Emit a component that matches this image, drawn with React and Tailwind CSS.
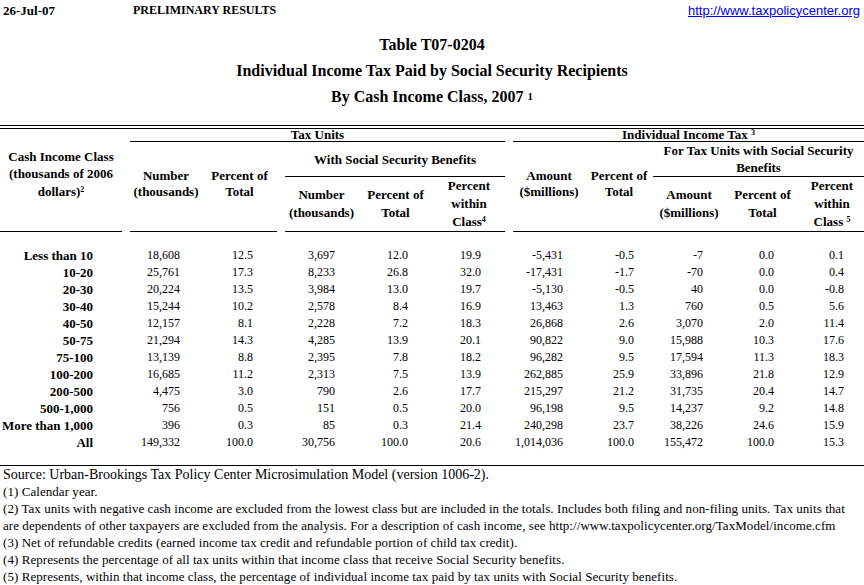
const rows = [
  ["Less than 10", "18,608", "12.5", "3,697", "12.0", "19.9", "-5,431", "-0.5", "-7", "0.0", "0.1"],
  ["10-20", "25,761", "17.3", "8,233", "26.8", "32.0", "-17,431", "-1.7", "-70", "0.0", "0.4"],
  ["20-30", "20,224", "13.5", "3,984", "13.0", "19.7", "-5,130", "-0.5", "40", "0.0", "-0.8"],
  ["30-40", "15,244", "10.2", "2,578", "8.4", "16.9", "13,463", "1.3", "760", "0.5", "5.6"],
  ["40-50", "12,157", "8.1", "2,228", "7.2", "18.3", "26,868", "2.6", "3,070", "2.0", "11.4"],
  ["50-75", "21,294", "14.3", "4,285", "13.9", "20.1", "90,822", "9.0", "15,988", "10.3", "17.6"],
  ["75-100", "13,139", "8.8", "2,395", "7.8", "18.2", "96,282", "9.5", "17,594", "11.3", "18.3"],
  ["100-200", "16,685", "11.2", "2,313", "7.5", "13.9", "262,885", "25.9", "33,896", "21.8", "12.9"],
  ["200-500", "4,475", "3.0", "790", "2.6", "17.7", "215,297", "21.2", "31,735", "20.4", "14.7"],
  ["500-1,000", "756", "0.5", "151", "0.5", "20.0", "96,198", "9.5", "14,237", "9.2", "14.8"],
  ["More than 1,000", "396", "0.3", "85", "0.3", "21.4", "240,298", "23.7", "38,226", "24.6", "15.9"],
  ["All", "149,332", "100.0", "30,756", "100.0", "20.6", "1,014,036", "100.0", "155,472", "100.0", "15.3"],
];

const th = "p-0 text-center align-middle font-bold text-[13px] border-b border-black";

function Sp() {
  return <td className="p-0" />;
}

function DataRow({ r }) {
  const td = "p-0 text-right text-[12px] leading-[17px] h-[17px] whitespace-nowrap";
  return (
    <tr>
      <td className={`${td} pr-[29px] font-bold text-[13px]`}>{r[0]}</td>
      <Sp />
      <td className={`${td} pr-[22px]`}>{r[1]}</td>
      <td className={`${td} pr-[24px]`}>{r[2]}</td>
      <Sp />
      <td className={`${td} pr-[23px]`}>{r[3]}</td>
      <td className={`${td} pr-[25px]`}>{r[4]}</td>
      <td className={`${td} pr-[24px]`}>{r[5]}</td>
      <Sp />
      <td className={`${td} pr-[22px]`}>{r[6]}</td>
      <td className={`${td} pr-[19px]`}>{r[7]}</td>
      <td className={`${td} pr-[22px]`}>{r[8]}</td>
      <td className={`${td} pr-[26px]`}>{r[9]}</td>
      <td className={`${td} pr-[20px]`}>{r[10]}</td>
    </tr>
  );
}

export default function App() {
  return (
    <div className="w-[864px] min-h-[585px] bg-white text-black font-['Liberation_Serif','Times_New_Roman',serif] overflow-hidden">
      {/* top bar */}
      <div className="h-[20px] flex items-center relative">
        <span className="pl-[3px] w-[133px] font-bold text-[13px] leading-none">26-Jul-07</span>
        <span className="font-bold text-[12px] leading-none">PRELIMINARY RESULTS</span>
        <a
          href="#"
          className="ml-auto pr-[4px] text-[13px] leading-none text-[#0000ff] underline font-['Liberation_Sans',Arial,sans-serif]"
        >
          http://www.taxpolicycenter.org
        </a>
      </div>

      {/* titles */}
      <div className="pt-[12px] font-bold text-[16px]">
        <div className="h-[26px] flex items-center justify-center">Table T07-0204</div>
        <div className="h-[26px] flex items-center justify-center">
          Individual Income Tax Paid by Social Security Recipients
        </div>
        <div className="h-[26px] flex items-center justify-center">
          <span>
            By Cash Income Class, 2007 <sup className="text-[11px] font-bold relative -top-[2px]">1</sup>
          </span>
        </div>
      </div>

      <div className="h-[15px]" />

      <div className="border-t-4 border-double border-black">
        <table className="w-[864px] table-fixed border-separate border-spacing-0">
          <colgroup>
            <col className="w-[122px]" />
            <col className="w-[8px]" />
            <col className="w-[72px]" />
            <col className="w-[75px]" />
            <col className="w-[8px]" />
            <col className="w-[73px]" />
            <col className="w-[75px]" />
            <col className="w-[72px]" />
            <col className="w-[8px]" />
            <col className="w-[72px]" />
            <col className="w-[68px]" />
            <col className="w-[72px]" />
            <col className="w-[75px]" />
            <col className="w-[64px]" />
          </colgroup>
          <thead>
            <tr className="h-[13px]">
              <td rowSpan={3} className={`${th} leading-[17.5px] pb-[12px]`}>
                Cash Income Class
                <br />
                (thousands of 2006
                <br />
                dollars)<sup className="text-[8px]">2</sup>
              </td>
              <td rowSpan={3} className="p-0" />
              <td colSpan={6} className={`${th} leading-[12px]`}>
                Tax Units
              </td>
              <td rowSpan={3} className="p-0" />
              <td colSpan={5} className={`${th} leading-[12px]`}>
                Individual Income Tax <sup className="text-[8px]">3</sup>
              </td>
            </tr>
            <tr className="h-[35px]">
              <td rowSpan={2} className={`${th} leading-[16px] pb-[5px]`}>
                Number
                <br />
                (thousands)
              </td>
              <td rowSpan={2} className={`${th} leading-[16px] pb-[5px]`}>
                Percent of
                <br />
                Total
              </td>
              <td rowSpan={2} className="p-0" />
              <td colSpan={3} className={`${th} leading-[17px]`}>
                With Social Security Benefits
              </td>
              <td rowSpan={2} className={`${th} leading-[16px] pb-[5px]`}>
                Amount
                <br />
                ($millions)
              </td>
              <td rowSpan={2} className={`${th} leading-[16px] pb-[5px]`}>
                Percent of
                <br />
                Total
              </td>
              <td colSpan={3} className={`${th} leading-[17px]`}>
                For Tax Units with Social Security
                <br />
                Benefits
              </td>
            </tr>
            <tr className="h-[55px]">
              <td className={`${th} leading-[18px]`}>
                Number
                <br />
                (thousands)
              </td>
              <td className={`${th} leading-[18px]`}>
                Percent of
                <br />
                Total
              </td>
              <td className={`${th} leading-[18px]`}>
                Percent
                <br />
                within
                <br />
                Class<sup className="text-[8px]">4</sup>
              </td>
              <td className={`${th} leading-[18px]`}>
                Amount
                <br />
                ($millions)
              </td>
              <td className={`${th} leading-[18px]`}>
                Percent of
                <br />
                Total
              </td>
              <td className={`${th} leading-[18px]`}>
                Percent
                <br />
                within
                <br />
                Class <sup className="text-[8px]">5</sup>
              </td>
            </tr>
          </thead>
          <tbody>
            <tr className="h-[15px]">
              <td colSpan={14} className="p-0" />
            </tr>
            {rows.map((r) => (
              <DataRow key={r[0]} r={r} />
            ))}
          </tbody>
        </table>
      </div>

      <div className="h-[14px]" />

      <div className="border-t border-black text-[13px] leading-[17px] pl-[3px] tracking-[0.06px]">
        <div className="text-[14px] tracking-normal">
          Source: Urban-Brookings Tax Policy Center Microsimulation Model (version 1006-2).
        </div>
        <div>(1) Calendar year.</div>
        <div>
          (2) Tax units with negative cash income are excluded from the lowest class but are included in the totals. Includes both filing and non-filing units. Tax units that
        </div>
        <div>
          are dependents of other taxpayers are excluded from the analysis. For a description of cash income, see http://www.taxpolicycenter.org/TaxModel/income.cfm
        </div>
        <div>(3) Net of refundable credits (earned income tax credit and refundable portion of child tax credit).</div>
        <div>(4) Represents the percentage of all tax units within that income class that receive Social Security benefits.</div>
        <div>(5) Represents, within that income class, the percentage of individual income tax paid by tax units with Social Security benefits.</div>
      </div>
    </div>
  );
}
